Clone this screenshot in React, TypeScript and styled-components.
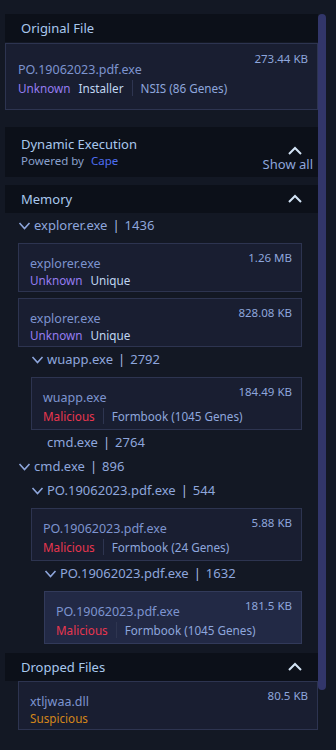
import React from 'react';
import styled, { createGlobalStyle } from 'styled-components';

const GlobalStyle = createGlobalStyle`
  body {
    margin: 0;
    background: #131824;
    font-family: 'Noto Sans', 'Open Sans', sans-serif;
  }
`;

const Page = styled.div`
  display: flex;
  align-items: flex-start;
  padding: 14px 0 0 5px;
  height: 736px;
  overflow: hidden;
`;

const Content = styled.div`
  width: 313px;
  display: flex;
  flex-direction: column;
`;

const ScrollThumb = styled.div`
  width: 8px;
  height: 676px;
  border-radius: 4px;
  background: #32366a;
`;

const SectionHeader = styled.div<{ $gap?: number }>`
  display: flex;
  align-items: center;
  justify-content: space-between;
  height: 28px;
  margin-top: ${(p) => p.$gap ?? 0}px;
  padding: 0 16px;
  background: #0c1019;
`;

const SectionTitle = styled.span`
  font-size: 13px;
  color: #a9c8ee;
`;

const DynamicHeader = styled.div`
  display: flex;
  justify-content: space-between;
  height: 50px;
  margin-top: 17px;
  padding: 8px 5px 0 16px;
  box-sizing: border-box;
  background: #0c1019;
`;

const TitleBlock = styled.div`
  display: flex;
  flex-direction: column;
`;

const Powered = styled.span`
  font-size: 11.5px;
  line-height: 15px;
  color: #8aa0cc;

  b {
    font-weight: 400;
    color: #4e6ef2;
    margin-left: 4px;
  }
`;

const ShowAll = styled.div`
  display: flex;
  flex-direction: column;
  align-items: flex-end;
  padding-top: 11px;
  font-size: 13px;
  line-height: 17px;
  color: #8ea6dc;

  svg {
    margin-right: 11px;
  }
`;

const Card = styled.div<{ $loose?: boolean; $active?: boolean }>`
  display: flex;
  justify-content: space-between;
  align-items: flex-start;
  white-space: nowrap;
  padding: ${(p) => (p.$loose ? '7px 9px 11px 12px' : '6px 9px 3px 11px')};
  border: 1px solid ${(p) => (p.$active ? '#323a5a' : '#2d3450')};
  background: ${(p) => (p.$active ? '#222945' : '#191e31')};
  & + & {
    margin-top: 6px;
  }
`;

const CardMain = styled.div<{ $loose?: boolean }>`
  flex: 1;
  min-width: 0;
  display: flex;
  flex-direction: column;
  margin-top: ${(p) => (p.$loose ? 11 : 6)}px;
`;

const FileName = styled.span`
  font-size: 12.5px;
  line-height: 16px;
  color: #7d94cf;
`;

const Size = styled.span`
  flex-shrink: 0;
  font-size: 11.5px;
  line-height: 16px;
  color: #8ea6dc;
`;

const Tags = styled.div`
  display: flex;
  align-items: center;
  min-height: 16px;
  font-size: 11.7px;
  line-height: 16px;
  gap: 8px;
`;

const Verdict = styled.span<{ $kind: string }>`
  color: ${(p) =>
    p.$kind === 'Malicious' ? '#e8364f' : p.$kind === 'Suspicious' ? '#d4861a' : '#957cf0'};
`;

const Kind = styled.span`
  color: #c0d6f2;
`;

const Sep = styled.span`
  flex-shrink: 0;
  width: 1px;
  height: 16px;
  margin: 2px 0;
  background: #2e3550;
`;

const Genes = styled.span`
  color: #8ea6dc;
`;

const TreeBody = styled.div<{ $flush?: boolean }>`
  display: flex;
  flex-direction: column;
  padding: 0 ${(p) => (p.$flush ? 0 : 16)}px 0 13px;
`;

const Children = styled.div`
  display: flex;
  flex-direction: column;
  padding-left: 13px;
`;

const NodeRow = styled.div<{ $leaf?: boolean }>`
  display: flex;
  align-items: center;
  gap: 3px;
  height: 24px;
  white-space: nowrap;
  padding-left: ${(p) => (p.$leaf ? 16 : 0)}px;
  font-size: 13px;
  color: #8ea6dc;

  i {
    font-style: normal;
    margin: 0 5px;
    color: #a9bde6;
  }
`;

const Cards = styled.div`
  display: flex;
  flex-direction: column;
  margin-top: 6px;
`;

const ChevronDown = () => (
  <svg width="13" height="13" viewBox="0 0 13 13">
    <path d="M1.5 4 L6.5 9.5 L11.5 4" fill="none" stroke="#8ea6dc" strokeWidth="1.6" />
  </svg>
);

const ChevronUp = () => (
  <svg width="14" height="10" viewBox="0 0 14 10">
    <path d="M1 8 L7 2 L13 8" fill="none" stroke="#d3e3f5" strokeWidth="2" />
  </svg>
);

type FileInfo = {
  name: string;
  size: string;
  verdict: string;
  kind?: string;
  genes?: string;
  active?: boolean;
};

const FileCard = ({ f, loose }: { f: FileInfo; loose?: boolean }) => (
  <Card $loose={loose} $active={f.active}>
    <CardMain $loose={loose}>
      <FileName>{f.name}</FileName>
      <Tags>
        <Verdict $kind={f.verdict}>{f.verdict}</Verdict>
        {f.kind && <Kind>{f.kind}</Kind>}
        {f.genes && (
          <>
            <Sep />
            <Genes>{f.genes}</Genes>
          </>
        )}
      </Tags>
    </CardMain>
    <Size>{f.size}</Size>
  </Card>
);

type ProcNode = {
  name: string;
  pid: number;
  files?: FileInfo[];
  children?: ProcNode[];
};

const tree: ProcNode[] = [
  {
    name: 'explorer.exe',
    pid: 1436,
    files: [
      { name: 'explorer.exe', size: '1.26 MB', verdict: 'Unknown', kind: 'Unique' },
      { name: 'explorer.exe', size: '828.08 KB', verdict: 'Unknown', kind: 'Unique' },
    ],
    children: [
      {
        name: 'wuapp.exe',
        pid: 2792,
        files: [{ name: 'wuapp.exe', size: '184.49 KB', verdict: 'Malicious', genes: 'Formbook (1045 Genes)' }],
      },
      { name: 'cmd.exe', pid: 2764 },
    ],
  },
  {
    name: 'cmd.exe',
    pid: 896,
    children: [
      {
        name: 'PO.19062023.pdf.exe',
        pid: 544,
        files: [{ name: 'PO.19062023.pdf.exe', size: '5.88 KB', verdict: 'Malicious', genes: 'Formbook (24 Genes)' }],
        children: [
          {
            name: 'PO.19062023.pdf.exe',
            pid: 1632,
            files: [
              {
                name: 'PO.19062023.pdf.exe',
                size: '181.5 KB',
                verdict: 'Malicious',
                genes: 'Formbook (1045 Genes)',
                active: true,
              },
            ],
          },
        ],
      },
    ],
  },
];

const Node = ({ node }: { node: ProcNode }) => {
  const hasKids = !!(node.files?.length || node.children?.length);
  return (
    <>
      <NodeRow $leaf={!hasKids}>
        {hasKids && <ChevronDown />}
        <span>
          {node.name}
          <i>|</i>
          {node.pid}
        </span>
      </NodeRow>
      {node.files && (
        <Cards>
          {node.files.map((f, i) => (
            <FileCard key={i} f={f} />
          ))}
        </Cards>
      )}
      {node.children && (
        <Children>
          {node.children.map((c, i) => (
            <Node key={i} node={c} />
          ))}
        </Children>
      )}
    </>
  );
};

const OriginalWrap = styled.div`
  margin-top: 1px;
`;

export default function App() {
  return (
    <>
      <GlobalStyle />
      <Page>
        <Content>
          <SectionHeader>
            <SectionTitle>Original File</SectionTitle>
          </SectionHeader>
          <OriginalWrap>
            <FileCard
              loose
              f={{
                name: 'PO.19062023.pdf.exe',
                size: '273.44 KB',
                verdict: 'Unknown',
                kind: 'Installer',
                genes: 'NSIS (86 Genes)',
              }}
            />
          </OriginalWrap>

          <DynamicHeader>
            <TitleBlock>
              <SectionTitle>Dynamic Execution</SectionTitle>
              <Powered>
                Powered by <b>Cape</b>
              </Powered>
            </TitleBlock>
            <ShowAll>
              <ChevronUp />
              Show all
            </ShowAll>
          </DynamicHeader>

          <SectionHeader $gap={8}>
            <SectionTitle>Memory</SectionTitle>
            <ChevronUp />
          </SectionHeader>
          <TreeBody>
            {tree.map((n, i) => (
              <Node key={i} node={n} />
            ))}
          </TreeBody>

          <SectionHeader $gap={9}>
            <SectionTitle>Dropped Files</SectionTitle>
            <ChevronUp />
          </SectionHeader>
          <TreeBody $flush>
            <FileCard f={{ name: 'xtljwaa.dll', size: '80.5 KB', verdict: 'Suspicious' }} />
          </TreeBody>
        </Content>
        <ScrollThumb />
      </Page>
    </>
  );
}
